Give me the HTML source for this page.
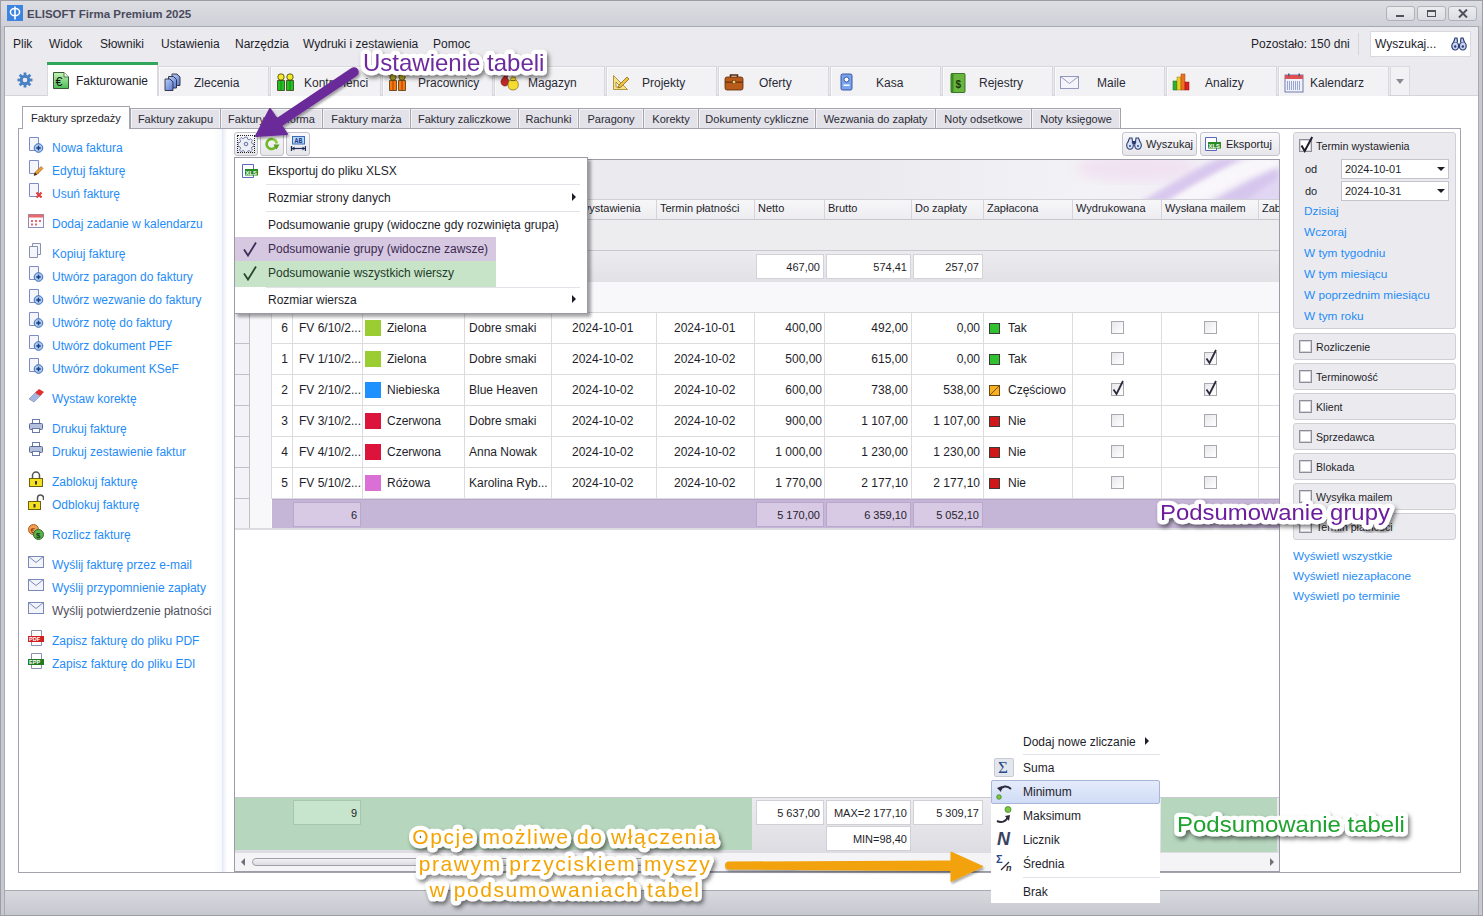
<!DOCTYPE html>
<html><head><meta charset="utf-8">
<style>
*{box-sizing:border-box;margin:0;padding:0}
html,body{width:1483px;height:916px;overflow:hidden}
body{position:relative;background:#c9cad1;font-family:"Liberation Sans",sans-serif;color:#1e1e2a;font-size:12px}
.a{position:absolute}
.t{position:absolute;white-space:nowrap;line-height:1}
#outer{left:0;top:0;width:1483px;height:916px;border:1px solid #9c9da7;background:#c8c9d0}
#titlebar{left:1px;top:1px;width:1481px;height:25px;background:linear-gradient(#dcdde3,#d0d1d8)}
#win{left:4px;top:26px;width:1475px;height:889px;background:#fff;border:1px solid #a8a9b1}
#menubar{left:5px;top:27px;width:1473px;height:31px;background:#ebebef}
#tabstrip{left:5px;top:58px;width:1473px;height:38px;background:#ebebef;border-bottom:1px solid #d4d4da}
.mtab{position:absolute;top:66px;height:30px;width:111px;background:#f2f2f4;border:1px solid #d8d8dc;border-bottom:none;box-shadow:inset 1px 1px 0 #fafafc}
.mtab .lbl{position:absolute;top:9px;font-size:12px;color:#2a2a36;white-space:nowrap;line-height:14px}
.mtab svg{position:absolute;left:5px;top:6px}
.stab{position:absolute;top:108px;height:21px;background:#e2e2e8;border:1px solid #a3a4ae;box-shadow:inset 1px 1px 0 #f4f4f7,inset -1px 0 0 #f4f4f7;font-size:11px;color:#2a2a36;text-align:center;padding-top:5px;line-height:11px;white-space:nowrap}
#status{left:5px;top:890px;width:1473px;height:25px;background:linear-gradient(#d8d9df,#c7c8cf);border-top:1px solid #a9aab2}
</style></head><body>

<div class="a" id="outer"></div>
<div class="a" id="titlebar"></div>
<div class="a" style="left:7px;top:5px;width:16px;height:16px;background:#3c84e0"></div>
<svg class="a" style="left:7px;top:5px" width="16" height="16" viewBox="0 0 16 16"><ellipse cx="8" cy="7" rx="4.6" ry="3.6" fill="none" stroke="#fff" stroke-width="1.5"/><rect x="7.2" y="1.5" width="1.6" height="13" fill="#fff"/></svg>
<div class="t" style="left:27px;top:9px;font-size:11.5px;font-weight:bold;color:#4a4a5c">ELISOFT Firma Premium 2025</div>
<div class="a" style="left:1386px;top:6px;width:29px;height:15px;border:1px solid #b0b1b9;border-radius:3px;background:linear-gradient(#ececf0,#dcdde2)"></div>
<div class="a" style="left:1396px;top:15px;width:8px;height:2px;background:#50505a"></div>
<div class="a" style="left:1417px;top:6px;width:29px;height:15px;border:1px solid #b0b1b9;border-radius:3px;background:linear-gradient(#ececf0,#dcdde2)"></div>
<div class="a" style="left:1427px;top:10px;width:9px;height:7px;border:1px solid #50505a;border-top-width:2px"></div>
<div class="a" style="left:1448px;top:6px;width:29px;height:15px;border:1px solid #b0b1b9;border-radius:3px;background:linear-gradient(#ececf0,#dcdde2)"></div>
<svg class="a" style="left:1458px;top:9px" width="10" height="9" viewBox="0 0 10 9"><path d="M1 0.5l8 8M9 0.5l-8 8" stroke="#50505a" stroke-width="2"/></svg>
<div class="a" id="win"></div>
<div class="a" id="menubar"></div>
<div class="t" style="left:13px;top:38px;font-size:12px">Plik</div>
<div class="t" style="left:49px;top:38px;font-size:12px">Widok</div>
<div class="t" style="left:100px;top:38px;font-size:12px">Słowniki</div>
<div class="t" style="left:161px;top:38px;font-size:12px">Ustawienia</div>
<div class="t" style="left:235px;top:38px;font-size:12px">Narzędzia</div>
<div class="t" style="left:303px;top:38px;font-size:12px">Wydruki i zestawienia</div>
<div class="t" style="left:433px;top:38px;font-size:12px">Pomoc</div>
<div class="t" style="left:1251px;top:38px;font-size:12px">Pozostało: 150 dni</div>
<div class="a" style="left:1358px;top:33px;width:1px;height:22px;background:#d4d4da"></div>
<div class="a" style="left:1370px;top:31px;width:101px;height:26px;background:#fff;border:1px solid #d8d8de"></div>
<div class="t" style="left:1375px;top:38px;font-size:12px">Wyszukaj...</div>
<svg class="a" style="left:1451px;top:37px" width="16" height="14" viewBox="0 0 16 14"><g fill="#c8d6f4" stroke="#2a3a70" stroke-width="1.2"><ellipse cx="4.2" cy="9" rx="3.4" ry="4"/><ellipse cx="11.8" cy="9" rx="3.4" ry="4"/><path d="M2.5 5.5l1.5-4.5h2l.5 4M13.5 5.5l-1.5-4.5h-2l-.5 4"/></g><circle cx="4.2" cy="9.5" r="1.2" fill="#2a3a70"/><circle cx="11.8" cy="9.5" r="1.2" fill="#2a3a70"/></svg>
<div class="a" id="status"></div>
<div class="a" id="tabstrip"></div>
<svg class="a" style="left:17px;top:72px" width="16" height="16" viewBox="0 0 16 16"><g fill="#4a80c4"><circle cx="8" cy="8" r="5.2"/><rect x="6.6" y="0.5" width="2.8" height="15"/><rect x="0.5" y="6.6" width="15" height="2.8"/><rect x="6.6" y="0.5" width="2.8" height="15" transform="rotate(45 8 8)"/><rect x="6.6" y="0.5" width="2.8" height="15" transform="rotate(-45 8 8)"/></g><circle cx="8" cy="8" r="2.3" fill="#ebebef"/></svg>
<div class="a" style="left:47px;top:62px;width:111px;height:34px;background:#fff;border-left:1px solid #dadade;border-right:1px solid #dadade"></div>
<div class="a" style="left:47px;top:62px;width:111px;height:3px;background:#2fa65a"></div>
<svg class="a" style="left:53px;top:72px" width="16" height="17" viewBox="0 0 16 17"><defs><linearGradient id="ge" x1="0" y1="0" x2="0" y2="1"><stop offset="0" stop-color="#c4f4b8"/><stop offset="1" stop-color="#4cbc58"/></linearGradient></defs><path d="M0.5 0.5H11L15.5 5V16.5H0.5Z" fill="url(#ge)" stroke="#3a5a3a"/><path d="M11 0.5V5H15.5" fill="#e8f8e8" stroke="#3a5a3a" stroke-width="0.8"/><text x="2.5" y="14" font-family="Liberation Sans" font-size="12.5" fill="#111">€</text></svg>
<div class="t" style="left:76px;top:75px;font-size:12px;color:#1e1e2a">Fakturowanie</div>
<div class="mtab" style="left:158px"><svg width="18" height="18" viewBox="0 0 18 18"><defs><linearGradient id="gz" x1="0" y1="0" x2="1" y2="1"><stop offset="0" stop-color="#b8d0f8"/><stop offset="1" stop-color="#5a78d0"/></linearGradient></defs><g stroke="#2a2a40" stroke-width="0.9" fill="url(#gz)"><path d="M8 1h5l3 3v8.5h-8z"/><path d="M4.5 3.5h5l3 3v8.5h-8z"/><path d="M1 6h5l3 3v8.5h-8z"/></g></svg><span class="lbl" style="left:35px">Zlecenia</span></div>
<div class="mtab" style="left:270px"><svg width="20" height="18" viewBox="0 0 20 18"><g stroke="#3a3a10" stroke-width="0.8"><circle cx="5" cy="4" r="3.2" fill="#f4ec20"/><circle cx="14" cy="4" r="3.2" fill="#f4ec20"/><path d="M1.5 7.5h7v10h-7z" fill="#22c022"/><path d="M10.5 7.5h7v10h-7z" fill="#22c022"/></g><path d="M5 8v9M14 8v9" stroke="#108010" stroke-width="0.8"/></svg><span class="lbl" style="left:33px">Kontrahenci</span></div>
<div class="mtab" style="left:382px"><svg width="20" height="18" viewBox="0 0 20 18"><g stroke="#4a3a10" stroke-width="0.8"><circle cx="5" cy="4" r="3.2" fill="#b8a828"/><circle cx="14" cy="4" r="3.2" fill="#b8a828"/><path d="M1.5 7.5h7v10h-7z" fill="#f47a10"/><path d="M10.5 7.5h7v10h-7z" fill="#f47a10"/></g><path d="M5 8v9M14 8v9" stroke="#c04000" stroke-width="1.2"/></svg><span class="lbl" style="left:35px">Pracownicy</span></div>
<div class="mtab" style="left:494px"><svg width="20" height="18" viewBox="0 0 20 18"><path d="M2 6l3-4h3l-1 3c3 2 2 8-2 8c-4 0-5-5-3-7z" fill="#c02828" stroke="#601010" stroke-width="0.6"/><path d="M10 7l2-3h3l1 3c4 3 3 10-3 10c-6 0-6-7-3-10z" fill="#f6dc30" stroke="#806a10" stroke-width="0.7"/><path d="M10.5 7.5h5" stroke="#806a10" stroke-width="1"/></svg><span class="lbl" style="left:33px">Magazyn</span></div>
<div class="mtab" style="left:606px"><svg width="20" height="18" viewBox="0 0 20 18"><path d="M1.5 2.5v14h14z M4 9v5h5z" fill="#f8e08a" fill-rule="evenodd" stroke="#a08020" stroke-width="0.8"/><path d="M6 15l1-3 8-8 2 2-8 8z" fill="#f0c040" stroke="#805a10" stroke-width="0.7"/></svg><span class="lbl" style="left:35px">Projekty</span></div>
<div class="mtab" style="left:718px"><svg width="20" height="18" viewBox="0 0 20 18"><path d="M6.5 4V2h7v2" fill="none" stroke="#5a2a08" stroke-width="1.6"/><rect x="1" y="4" width="18" height="13" rx="2" fill="#b85a1a" stroke="#5a2a08" stroke-width="0.8"/><rect x="1" y="8.5" width="18" height="1.3" fill="#6a300c"/><rect x="8.5" y="7.5" width="3" height="3" fill="#f0d070" stroke="#5a2a08" stroke-width="0.5"/></svg><span class="lbl" style="left:40px">Oferty</span></div>
<div class="mtab" style="left:830px"><svg width="20" height="18" viewBox="0 0 20 18"><rect x="5" y="1" width="11" height="16" rx="1.5" fill="#7aa4ec" stroke="#2a4a98" stroke-width="0.9"/><circle cx="10.5" cy="6.5" r="2.5" fill="#fff" stroke="#2a4a98" stroke-width="0.9"/><rect x="7.5" y="11.5" width="6" height="1.5" fill="#fff"/></svg><span class="lbl" style="left:45px">Kasa</span></div>
<div class="mtab" style="left:942px"><svg width="20" height="20" viewBox="0 0 20 20"><rect x="3" y="0.5" width="14" height="19" rx="1" fill="#6ab440" stroke="#2a6a18" stroke-width="0.9"/><rect x="3" y="0.5" width="2.5" height="19" fill="#3a8a22"/><text x="7.5" y="14.5" font-family="Liberation Sans" font-size="10" font-weight="bold" fill="#1a3a0a">$</text></svg><span class="lbl" style="left:36px">Rejestry</span></div>
<div class="mtab" style="left:1054px"><svg width="20" height="18" viewBox="0 0 20 18"><rect x="0.5" y="3.5" width="18" height="12" fill="#f4f4fa" stroke="#8a90b8" stroke-width="0.9"/><path d="M0.5 3.5l9 7 9-7" fill="none" stroke="#8a90b8" stroke-width="0.9"/></svg><span class="lbl" style="left:42px">Maile</span></div>
<div class="mtab" style="left:1166px"><svg width="20" height="18" viewBox="0 0 20 18"><rect x="1" y="8" width="4" height="9" fill="#30b030" stroke="#1a6a1a" stroke-width="0.5"/><rect x="5" y="4" width="4" height="13" fill="#e8d020" stroke="#8a7a10" stroke-width="0.5"/><rect x="9" y="1" width="4" height="16" fill="#f07020" stroke="#9a4010" stroke-width="0.5"/><rect x="13" y="9" width="4" height="8" fill="#e02020" stroke="#8a1010" stroke-width="0.5"/></svg><span class="lbl" style="left:38px">Analizy</span></div>
<div class="mtab" style="left:1278px"><svg width="20" height="20" viewBox="0 0 20 20"><rect x="1" y="2" width="18" height="17" fill="#eef0fa" stroke="#6070a0" stroke-width="0.9"/><rect x="1" y="2" width="18" height="4" fill="#e05050"/><g fill="#9aa4d0"><rect x="3" y="8" width="1" height="9"/><rect x="5" y="8" width="1" height="9"/><rect x="7" y="8" width="1" height="9"/><rect x="9" y="8" width="1" height="9"/><rect x="11" y="8" width="1" height="9"/><rect x="13" y="8" width="1" height="9"/><rect x="15" y="8" width="1" height="9"/></g><rect x="4" y="0.5" width="1.5" height="3" fill="#505a80"/><rect x="14.5" y="0.5" width="1.5" height="3" fill="#505a80"/></svg><span class="lbl" style="left:31px">Kalendarz</span></div>
<div class="a" style="left:1390px;top:66px;width:20px;height:29px;background:#f2f2f4;border:1px solid #dadade;border-bottom:none"></div>
<div class="a" style="left:1396px;top:79px;width:0;height:0;border-left:4.5px solid transparent;border-right:4.5px solid transparent;border-top:5px solid #8a8a94"></div>
<div class="a" style="left:18px;top:128px;width:1443px;height:745px;border:1px solid #a3a4ae;background:#fff"></div>
<div class="stab" style="left:130px;width:91px">Faktury zakupu</div>
<div class="stab" style="left:220px;width:103px">Faktury pro forma</div>
<div class="stab" style="left:322px;width:89px">Faktury marża</div>
<div class="stab" style="left:410px;width:109px">Faktury zaliczkowe</div>
<div class="stab" style="left:518px;width:61px">Rachunki</div>
<div class="stab" style="left:578px;width:66px">Paragony</div>
<div class="stab" style="left:643px;width:56px">Korekty</div>
<div class="stab" style="left:698px;width:118px">Dokumenty cykliczne</div>
<div class="stab" style="left:815px;width:121px">Wezwania do zapłaty</div>
<div class="stab" style="left:935px;width:97px">Noty odsetkowe</div>
<div class="stab" style="left:1031px;width:90px">Noty księgowe</div>
<div class="a" style="left:22px;top:106px;width:108px;height:23px;background:#fff;border:1px solid #a3a4ae;border-bottom:none"></div>
<div class="t" style="left:31px;top:113px;font-size:11px;color:#1e1e2a">Faktury sprzedaży</div>
<div class="a" style="left:212px;top:129px;width:10px;height:743px;background:linear-gradient(90deg,#fff,#f8f9fc)"></div><div class="a" style="left:222px;top:129px;width:5px;height:743px;background:linear-gradient(90deg,#e2e8f4,#f4f6fb 60%,#fff)"></div>
<svg class="a" style="left:28px;top:137px" width="16" height="16" viewBox="0 0 16 16"><path d="M1.5 0.5h9v13h-9z" fill="#f4f6fc" stroke="#7d8cc8"/><circle cx="10.5" cy="11" r="4.3" fill="#a8c8ee" stroke="#3a6ab8" stroke-width="1"/><path d="M8.3 11h4.4M10.5 8.8v4.4" stroke="#1a3a80" stroke-width="1.4"/></svg>
<div class="t" style="left:52px;top:142px;font-size:12px;color:#1f8cf8">Nowa faktura</div>
<svg class="a" style="left:28px;top:160px" width="16" height="16" viewBox="0 0 16 16"><path d="M1.5 0.5h9v13h-9z" fill="#f4f6fc" stroke="#7d8cc8"/><path d="M6 15.5l1-3 6-6 2 2-6 6z" fill="#e8a030" stroke="#9a5a10" stroke-width="0.6"/><path d="M6 15.5l1-3 2 2z" fill="#222"/></svg>
<div class="t" style="left:52px;top:165px;font-size:12px;color:#1f8cf8">Edytuj fakturę</div>
<svg class="a" style="left:28px;top:183px" width="16" height="16" viewBox="0 0 16 16"><path d="M1.5 0.5h9v13h-9z" fill="#f4f6fc" stroke="#7d8cc8"/><path d="M8.5 9.5l5 5M13.5 9.5l-5 5" stroke="#e04040" stroke-width="2.2"/></svg>
<div class="t" style="left:52px;top:188px;font-size:12px;color:#1f8cf8">Usuń fakturę</div>
<svg class="a" style="left:28px;top:213px" width="16" height="16" viewBox="0 0 16 16"><rect x="0.5" y="1.5" width="15" height="13" fill="#fafafe" stroke="#8a8fb8"/><rect x="0.5" y="1.5" width="15" height="3" fill="#e86a6a"/><g fill="#e06a6a"><rect x="3" y="7" width="2" height="2"/><rect x="7" y="7" width="2" height="2"/><rect x="11" y="7" width="2" height="2"/><rect x="3" y="10.5" width="2" height="2"/><rect x="7" y="10.5" width="2" height="2"/></g></svg>
<div class="t" style="left:52px;top:218px;font-size:12px;color:#1f8cf8">Dodaj zadanie w kalendarzu</div>
<svg class="a" style="left:28px;top:243px" width="16" height="16" viewBox="0 0 16 16"><path d="M4.5 0.5h8v11h-8z" fill="#f4f6fc" stroke="#8a90b0"/><path d="M1.5 3.5h8v11h-8z" fill="#f4f6fc" stroke="#8a90b0"/></svg>
<div class="t" style="left:52px;top:248px;font-size:12px;color:#1f8cf8">Kopiuj fakturę</div>
<svg class="a" style="left:28px;top:266px" width="16" height="16" viewBox="0 0 16 16"><path d="M1.5 0.5h9v13h-9z" fill="#f4f6fc" stroke="#7d8cc8"/><circle cx="10.5" cy="11" r="4.3" fill="#a8c8ee" stroke="#3a6ab8" stroke-width="1"/><path d="M8.3 11h4.4M10.5 8.8v4.4" stroke="#1a3a80" stroke-width="1.4"/></svg>
<div class="t" style="left:52px;top:271px;font-size:12px;color:#1f8cf8">Utwórz paragon do faktury</div>
<svg class="a" style="left:28px;top:289px" width="16" height="16" viewBox="0 0 16 16"><path d="M1.5 0.5h9v13h-9z" fill="#f4f6fc" stroke="#7d8cc8"/><circle cx="10.5" cy="11" r="4.3" fill="#a8c8ee" stroke="#3a6ab8" stroke-width="1"/><path d="M8.3 11h4.4M10.5 8.8v4.4" stroke="#1a3a80" stroke-width="1.4"/></svg>
<div class="t" style="left:52px;top:294px;font-size:12px;color:#1f8cf8">Utwórz wezwanie do faktury</div>
<svg class="a" style="left:28px;top:312px" width="16" height="16" viewBox="0 0 16 16"><path d="M1.5 0.5h9v13h-9z" fill="#f4f6fc" stroke="#7d8cc8"/><circle cx="10.5" cy="11" r="4.3" fill="#a8c8ee" stroke="#3a6ab8" stroke-width="1"/><path d="M8.3 11h4.4M10.5 8.8v4.4" stroke="#1a3a80" stroke-width="1.4"/></svg>
<div class="t" style="left:52px;top:317px;font-size:12px;color:#1f8cf8">Utwórz notę do faktury</div>
<svg class="a" style="left:28px;top:335px" width="16" height="16" viewBox="0 0 16 16"><path d="M1.5 0.5h9v13h-9z" fill="#f4f6fc" stroke="#7d8cc8"/><circle cx="10.5" cy="11" r="4.3" fill="#a8c8ee" stroke="#3a6ab8" stroke-width="1"/><path d="M8.3 11h4.4M10.5 8.8v4.4" stroke="#1a3a80" stroke-width="1.4"/></svg>
<div class="t" style="left:52px;top:340px;font-size:12px;color:#1f8cf8">Utwórz dokument PEF</div>
<svg class="a" style="left:28px;top:358px" width="16" height="16" viewBox="0 0 16 16"><path d="M1.5 0.5h9v13h-9z" fill="#f4f6fc" stroke="#7d8cc8"/><circle cx="10.5" cy="11" r="4.3" fill="#a8c8ee" stroke="#3a6ab8" stroke-width="1"/><path d="M8.3 11h4.4M10.5 8.8v4.4" stroke="#1a3a80" stroke-width="1.4"/></svg>
<div class="t" style="left:52px;top:363px;font-size:12px;color:#1f8cf8">Utwórz dokument KSeF</div>
<svg class="a" style="left:28px;top:388px" width="16" height="16" viewBox="0 0 16 16"><path d="M1 11l8-8 5 3-8 8z" fill="#f0f0f4" stroke="#8080a0" stroke-width="0.6"/><path d="M7 5l4-4 5 3-4 4z" fill="#e03030"/><path d="M1 11l6-6 5 3-6 6z" fill="#7090d0" opacity="0.6"/></svg>
<div class="t" style="left:52px;top:393px;font-size:12px;color:#1f8cf8">Wystaw korektę</div>
<svg class="a" style="left:28px;top:418px" width="16" height="16" viewBox="0 0 16 16"><rect x="4.5" y="1.5" width="7" height="4" fill="#fff" stroke="#6a7aa8"/><rect x="1.5" y="5.5" width="13" height="6" rx="1" fill="#b4c0dc" stroke="#5a6a98"/><rect x="4.5" y="10.5" width="7" height="4" fill="#fff" stroke="#6a7aa8"/></svg>
<div class="t" style="left:52px;top:423px;font-size:12px;color:#1f8cf8">Drukuj fakturę</div>
<svg class="a" style="left:28px;top:441px" width="16" height="16" viewBox="0 0 16 16"><rect x="4.5" y="1.5" width="7" height="4" fill="#fff" stroke="#6a7aa8"/><rect x="1.5" y="5.5" width="13" height="6" rx="1" fill="#b4c0dc" stroke="#5a6a98"/><rect x="4.5" y="10.5" width="7" height="4" fill="#fff" stroke="#6a7aa8"/></svg>
<div class="t" style="left:52px;top:446px;font-size:12px;color:#1f8cf8">Drukuj zestawienie faktur</div>
<svg class="a" style="left:28px;top:471px" width="16" height="16" viewBox="0 0 16 16"><path d="M4.5 7V4.5a3.5 3.5 0 0 1 7 0V7" fill="none" stroke="#555" stroke-width="1.5"/><rect x="1.5" y="7.5" width="13" height="8" fill="#f4e020" stroke="#6a6010"/><rect x="7" y="10" width="2" height="3.5" fill="#333"/></svg>
<div class="t" style="left:52px;top:476px;font-size:12px;color:#1f8cf8">Zablokuj fakturę</div>
<svg class="a" style="left:28px;top:494px" width="16" height="16" viewBox="0 0 16 16"><path d="M9.5 7V4a3 3 0 0 1 6 0V6" fill="none" stroke="#555" stroke-width="1.5"/><rect x="0.5" y="7.5" width="12" height="8" fill="#f4e020" stroke="#6a6010"/><rect x="5.5" y="10" width="2" height="3.5" fill="#333"/></svg>
<div class="t" style="left:52px;top:499px;font-size:12px;color:#1f8cf8">Odblokuj fakturę</div>
<svg class="a" style="left:28px;top:524px" width="16" height="16" viewBox="0 0 16 16"><circle cx="5.5" cy="5.5" r="5" fill="#f0a050" stroke="#b05a20"/><text x="2.5" y="9" font-size="8" font-family="Liberation Sans" fill="#803010">€</text><circle cx="10.5" cy="10.5" r="5" fill="#60b050" stroke="#2a7020"/><text x="8" y="14" font-size="8" font-weight="bold" font-family="Liberation Sans" fill="#103a10">$</text></svg>
<div class="t" style="left:52px;top:529px;font-size:12px;color:#1f8cf8">Rozlicz fakturę</div>
<svg class="a" style="left:28px;top:554px" width="16" height="16" viewBox="0 0 16 16"><rect x="0.5" y="2.5" width="15" height="11" fill="#f2f4fa" stroke="#7a88b8"/><path d="M0.5 2.5l7.5 6 7.5-6" fill="none" stroke="#7a88b8"/></svg>
<div class="t" style="left:52px;top:559px;font-size:12px;color:#1f8cf8">Wyślij fakturę przez e-mail</div>
<svg class="a" style="left:28px;top:577px" width="16" height="16" viewBox="0 0 16 16"><rect x="0.5" y="2.5" width="15" height="11" fill="#f2f4fa" stroke="#7a88b8"/><path d="M0.5 2.5l7.5 6 7.5-6" fill="none" stroke="#7a88b8"/></svg>
<div class="t" style="left:52px;top:582px;font-size:12px;color:#1f8cf8">Wyślij przypomnienie zapłaty</div>
<svg class="a" style="left:28px;top:600px" width="16" height="16" viewBox="0 0 16 16"><rect x="0.5" y="2.5" width="15" height="11" fill="#f2f4fa" stroke="#7a88b8"/><path d="M0.5 2.5l7.5 6 7.5-6" fill="none" stroke="#7a88b8"/></svg>
<div class="t" style="left:52px;top:605px;font-size:12px;color:#505060">Wyślij potwierdzenie płatności</div>
<svg class="a" style="left:28px;top:630px" width="16" height="16" viewBox="0 0 16 16"><path d="M3.5 0.5h10v15h-10z" fill="#fff" stroke="#8a90b0"/><rect x="0" y="6" width="16" height="6" fill="#d02020"/><text x="1" y="11.3" font-size="5.6" font-weight="bold" font-family="Liberation Sans" fill="#fff">PDF</text></svg>
<div class="t" style="left:52px;top:635px;font-size:12px;color:#1f8cf8">Zapisz fakturę do pliku PDF</div>
<svg class="a" style="left:28px;top:653px" width="16" height="16" viewBox="0 0 16 16"><path d="M3.5 0.5h10v15h-10z" fill="#fff" stroke="#8a90b0"/><rect x="0" y="6" width="16" height="6" fill="#207a20"/><text x="1" y="11.3" font-size="5.6" font-weight="bold" font-family="Liberation Sans" fill="#fff">EPP</text></svg>
<div class="t" style="left:52px;top:658px;font-size:12px;color:#1f8cf8">Zapisz fakturę do pliku EDI</div>
<div class="a" style="left:234px;top:132px;width:24px;height:24px;border:1px solid #c0c1c9;border-radius:3px;background:linear-gradient(#fafafc,#e6e6ea)"></div>
<div class="a" style="left:237px;top:135px;width:18px;height:18px;border:1px dotted #222"></div>
<svg class="a" style="left:238px;top:136px" width="16" height="16" viewBox="0 0 16 16"><path d="M6.8 1.2h2.4l.4 2 1.5.7 1.7-1.2 1.7 1.7-1.2 1.7.7 1.5 2 .4v2.4l-2 .4-.7 1.5 1.2 1.7-1.7 1.7-1.7-1.2-1.5.7-.4 2H6.8l-.4-2-1.5-.7-1.7 1.2-1.7-1.7 1.2-1.7-.7-1.5-2-.4V6.8l2-.4.7-1.5-1.2-1.7 1.7-1.7 1.7 1.2 1.5-.7z" fill="#eef0f6" stroke="#6a74a0" stroke-width="0.9"/><circle cx="8" cy="8" r="1.8" fill="#dde2f0" stroke="#6a74a0" stroke-width="1"/></svg>
<div class="a" style="left:260px;top:132px;width:24px;height:24px;border:1px solid #c0c1c9;border-radius:3px;background:linear-gradient(#fafafc,#e6e6ea)"></div>
<svg class="a" style="left:264px;top:136px" width="16" height="16" viewBox="0 0 16 16"><path d="M12.5 9A5 5 0 1 1 9 3.2" fill="none" stroke="#6fb628" stroke-width="2.6"/><path d="M9 3.2A5 5 0 0 1 12.8 7.5" fill="none" stroke="#8acc3a" stroke-width="2.6"/><path d="M9.5 8.5h6l-3 5z" fill="#5aa020"/></svg>
<div class="a" style="left:286px;top:132px;width:24px;height:24px;border:1px solid #c0c1c9;border-radius:3px;background:linear-gradient(#fafafc,#e6e6ea)"></div>
<svg class="a" style="left:290px;top:136px" width="16" height="16" viewBox="0 0 16 16"><rect x="2.5" y="0.5" width="12" height="7.5" fill="#b8d8f8" stroke="#3a6ab8"/><text x="4.6" y="6.8" font-family="Liberation Mono" font-size="6.5" font-weight="bold" fill="#1a3a88">AB</text><path d="M2 12.5h13" stroke="#1e2e58" stroke-width="1.2"/><path d="M1.5 10v5M15.5 10v5" stroke="#1e2e58" stroke-width="1.3"/><path d="M2 12.5l2.5-2v4zM15 12.5l-2.5-2v4z" fill="#1e2e58"/></svg>
<div class="a" style="left:1122px;top:132px;width:75px;height:24px;border:1px solid #c4c5cc;border-radius:3px;background:linear-gradient(#fafafc,#e6e6ea)"></div>
<svg class="a" style="left:1126px;top:137px" width="16" height="13" viewBox="0 0 16 13"><g fill="#d8e2f6" stroke="#2a3a70" stroke-width="1.1"><ellipse cx="4" cy="8.3" rx="3.3" ry="4"/><ellipse cx="12" cy="8.3" rx="3.3" ry="4"/><path d="M2 5l1.5-4h2.5l.5 4M14 5l-1.5-4h-2.5l-.5 4"/></g><rect x="6.5" y="4" width="3" height="3" fill="#2a3a70"/><circle cx="4" cy="9" r="1.1" fill="#2a5ab0"/><circle cx="12" cy="9" r="1.1" fill="#2a5ab0"/></svg>
<div class="t" style="left:1146px;top:139px;font-size:11px;color:#1e1e2a">Wyszukaj</div>
<div class="a" style="left:1200px;top:132px;width:80px;height:24px;border:1px solid #c4c5cc;border-radius:3px;background:linear-gradient(#fafafc,#e6e6ea)"></div>
<svg class="a" style="left:1205px;top:137px" width="16" height="15" viewBox="0 0 16 15"><path d="M0.5 0.5h11v13h-11z" fill="#fff" stroke="#5a6ab8"/><rect x="3" y="5" width="13" height="6.5" fill="#2a8a22"/><text x="3.6" y="10.6" font-family="Liberation Sans" font-size="5.8" font-weight="bold" fill="#fff">XLS</text></svg>
<div class="t" style="left:1226px;top:139px;font-size:11px;color:#1e1e2a">Eksportuj</div>
<div class="a" style="left:234px;top:159px;width:1046px;height:713px;border:1px solid #9c9ca8;background:#fff"></div>
<div class="a" style="left:235px;top:160px;width:1044px;height:40px;background:#ebebef;overflow:hidden"><svg width="1044" height="40" style="position:absolute;left:0;top:0"><defs><linearGradient id="sw0" x1="0" x2="1"><stop offset="0" stop-color="#ebebef"/><stop offset="0.6" stop-color="#ebebef"/><stop offset="0.82" stop-color="#f3f2f6"/><stop offset="1" stop-color="#f0ecf6"/></linearGradient><filter id="bl"><feGaussianBlur stdDeviation="2.5"/></filter><filter id="bl2"><feGaussianBlur stdDeviation="6"/></filter></defs><rect x="0" y="0" width="1044" height="40" fill="url(#sw0)"/><ellipse cx="900" cy="8" rx="60" ry="14" fill="#f0dcf0" opacity="0.7" filter="url(#bl2)"/><path d="M905 42 C935 25 960 8 985 -2 L1010 -2 C985 10 960 25 935 42Z" fill="#d9c8ee" filter="url(#bl)"/><path d="M930 42 C960 25 990 8 1020 -2 L1044 -2 L1044 5 C1020 12 995 25 965 42Z" fill="#faf8fc" opacity="0.9" filter="url(#bl)"/><path d="M975 42 C1000 28 1025 14 1044 8 L1046 42Z" fill="#d6c6ee" filter="url(#bl)"/><path d="M1010 42 C1025 30 1035 22 1046 18 L1046 42Z" fill="#e4daf4" opacity="0.8" filter="url(#bl)"/></svg></div>
<div class="a" style="left:235px;top:199px;width:1044px;height:21px;background:linear-gradient(#f7f7f9,#ededf1);border-top:1px solid #d0d0d6;border-bottom:1px solid #c8c8ce"></div>
<div class="a" style="left:271px;top:200px;width:1px;height:19px;background:#d4d4da"></div>
<div class="a" style="left:292px;top:200px;width:1px;height:19px;background:#d4d4da"></div>
<div class="a" style="left:362px;top:200px;width:1px;height:19px;background:#d4d4da"></div>
<div class="a" style="left:464px;top:200px;width:1px;height:19px;background:#d4d4da"></div>
<div class="a" style="left:551px;top:200px;width:1px;height:19px;background:#d4d4da"></div>
<div class="a" style="left:656px;top:200px;width:1px;height:19px;background:#d4d4da"></div>
<div class="a" style="left:754px;top:200px;width:1px;height:19px;background:#d4d4da"></div>
<div class="a" style="left:824px;top:200px;width:1px;height:19px;background:#d4d4da"></div>
<div class="a" style="left:911px;top:200px;width:1px;height:19px;background:#d4d4da"></div>
<div class="a" style="left:983px;top:200px;width:1px;height:19px;background:#d4d4da"></div>
<div class="a" style="left:1072px;top:200px;width:1px;height:19px;background:#d4d4da"></div>
<div class="a" style="left:1161px;top:200px;width:1px;height:19px;background:#d4d4da"></div>
<div class="a" style="left:1258px;top:200px;width:1px;height:19px;background:#d4d4da"></div>
<div class="a" style="left:235px;top:200px;width:1044px;height:19px;overflow:hidden">
<div class="t" style="left:320px;top:3px;font-size:11px;color:#1e1e2a">Data wystawienia</div>
<div class="t" style="left:425px;top:3px;font-size:11px;color:#1e1e2a">Termin płatności</div>
<div class="t" style="left:523px;top:3px;font-size:11px;color:#1e1e2a">Netto</div>
<div class="t" style="left:593px;top:3px;font-size:11px;color:#1e1e2a">Brutto</div>
<div class="t" style="left:680px;top:3px;font-size:11px;color:#1e1e2a">Do zapłaty</div>
<div class="t" style="left:752px;top:3px;font-size:11px;color:#1e1e2a">Zapłacona</div>
<div class="t" style="left:841px;top:3px;font-size:11px;color:#1e1e2a">Wydrukowana</div>
<div class="t" style="left:930px;top:3px;font-size:11px;color:#1e1e2a">Wysłana mailem</div>
<div class="t" style="left:1027px;top:3px;font-size:11px;color:#1e1e2a">Zab</div>
</div>
<div class="a" style="left:235px;top:220px;width:15px;height:309px;background:#f3f3f7;border-right:1px solid #c0c0c8"></div>
<div class="a" style="left:250px;top:220px;width:1029px;height:31px;background:#ededf0;border-bottom:1px solid #c8c8ce"></div>
<div class="a" style="left:250px;top:251px;width:1029px;height:31px;background:linear-gradient(#ececf0,#e2e2e6)"></div>
<div class="a" style="left:756px;top:254px;width:68px;height:25px;background:#fff;border:1px solid #d2d2d8"></div>
<div class="t" style="left:756px;width:64px;text-align:right;top:262px;font-size:11px;color:#1e1e2a">467,00</div>
<div class="a" style="left:826px;top:254px;width:85px;height:25px;background:#fff;border:1px solid #d2d2d8"></div>
<div class="t" style="left:826px;width:81px;text-align:right;top:262px;font-size:11px;color:#1e1e2a">574,41</div>
<div class="a" style="left:913px;top:254px;width:70px;height:25px;background:#fff;border:1px solid #d2d2d8"></div>
<div class="t" style="left:913px;width:66px;text-align:right;top:262px;font-size:11px;color:#1e1e2a">257,07</div>
<div class="a" style="left:250px;top:282px;width:1029px;height:31px;background:#f8f8fa;border-bottom:1px solid #d8d8dc"></div>
<div class="a" style="left:250px;top:313px;width:21px;height:216px;background:#f8f8fb"></div>
<div class="a" style="left:235px;top:343px;width:15px;height:1px;background:#c0c0c8"></div>
<div class="a" style="left:271px;top:343px;width:1008px;height:1px;background:#dcdce0"></div>
<div class="t" style="left:271px;width:17px;text-align:right;top:322px;font-size:12px">6</div>
<div class="t" style="left:299px;top:322px;font-size:12px">FV 6/10/2...</div>
<div class="a" style="left:365px;top:320px;width:16px;height:16px;background:#9acd32"></div>
<div class="t" style="left:387px;top:322px;font-size:12px">Zielona</div>
<div class="t" style="left:469px;top:322px;font-size:12px">Dobre smaki</div>
<div class="t" style="left:572px;top:322px;font-size:12px">2024-10-01</div>
<div class="t" style="left:674px;top:322px;font-size:12px">2024-10-01</div>
<div class="t" style="left:754px;width:68px;text-align:right;top:322px;font-size:12px">400,00</div>
<div class="t" style="left:824px;width:84px;text-align:right;top:322px;font-size:12px">492,00</div>
<div class="t" style="left:911px;width:69px;text-align:right;top:322px;font-size:12px">0,00</div>
<div class="a" style="left:989px;top:323px;width:11px;height:11px;background:#30c030;border:1px solid #3a3a3a"></div>
<div class="t" style="left:1008px;top:322px;font-size:12px">Tak</div>
<div class="a" style="left:1111px;top:321px;width:13px;height:13px;border:1px solid #a8a8b0;background:linear-gradient(135deg,#e8e8ec,#fff)"></div>
<div class="a" style="left:1204px;top:321px;width:13px;height:13px;border:1px solid #a8a8b0;background:linear-gradient(135deg,#e8e8ec,#fff)"></div>
<div class="a" style="left:235px;top:374px;width:15px;height:1px;background:#c0c0c8"></div>
<div class="a" style="left:271px;top:374px;width:1008px;height:1px;background:#dcdce0"></div>
<div class="t" style="left:271px;width:17px;text-align:right;top:353px;font-size:12px">1</div>
<div class="t" style="left:299px;top:353px;font-size:12px">FV 1/10/2...</div>
<div class="a" style="left:365px;top:351px;width:16px;height:16px;background:#9acd32"></div>
<div class="t" style="left:387px;top:353px;font-size:12px">Zielona</div>
<div class="t" style="left:469px;top:353px;font-size:12px">Dobre smaki</div>
<div class="t" style="left:572px;top:353px;font-size:12px">2024-10-02</div>
<div class="t" style="left:674px;top:353px;font-size:12px">2024-10-02</div>
<div class="t" style="left:754px;width:68px;text-align:right;top:353px;font-size:12px">500,00</div>
<div class="t" style="left:824px;width:84px;text-align:right;top:353px;font-size:12px">615,00</div>
<div class="t" style="left:911px;width:69px;text-align:right;top:353px;font-size:12px">0,00</div>
<div class="a" style="left:989px;top:354px;width:11px;height:11px;background:#30c030;border:1px solid #3a3a3a"></div>
<div class="t" style="left:1008px;top:353px;font-size:12px">Tak</div>
<div class="a" style="left:1111px;top:352px;width:13px;height:13px;border:1px solid #a8a8b0;background:linear-gradient(135deg,#e8e8ec,#fff)"></div>
<div class="a" style="left:1204px;top:352px;width:13px;height:13px;border:1px solid #a8a8b0;background:linear-gradient(135deg,#e8e8ec,#fff)"></div><svg class="a" style="left:1204px;top:349px" width="14" height="16" viewBox="0 0 14 16"><path d="M2.5 9.5l3 4.5 6.5-13" fill="none" stroke="#2a2a3a" stroke-width="1.8"/></svg>
<div class="a" style="left:235px;top:405px;width:15px;height:1px;background:#c0c0c8"></div>
<div class="a" style="left:271px;top:405px;width:1008px;height:1px;background:#dcdce0"></div>
<div class="t" style="left:271px;width:17px;text-align:right;top:384px;font-size:12px">2</div>
<div class="t" style="left:299px;top:384px;font-size:12px">FV 2/10/2...</div>
<div class="a" style="left:365px;top:382px;width:16px;height:16px;background:#1e90ff"></div>
<div class="t" style="left:387px;top:384px;font-size:12px">Niebieska</div>
<div class="t" style="left:469px;top:384px;font-size:12px">Blue Heaven</div>
<div class="t" style="left:572px;top:384px;font-size:12px">2024-10-02</div>
<div class="t" style="left:674px;top:384px;font-size:12px">2024-10-02</div>
<div class="t" style="left:754px;width:68px;text-align:right;top:384px;font-size:12px">600,00</div>
<div class="t" style="left:824px;width:84px;text-align:right;top:384px;font-size:12px">738,00</div>
<div class="t" style="left:911px;width:69px;text-align:right;top:384px;font-size:12px">538,00</div>
<svg class="a" style="left:989px;top:385px" width="11" height="11" viewBox="0 0 11 11"><rect x="0.5" y="0.5" width="10" height="10" fill="#f8b020" stroke="#6a4a10"/><path d="M1 10L10 1" stroke="#6a4a10" stroke-width="0.9"/></svg>
<div class="t" style="left:1008px;top:384px;font-size:12px">Częściowo</div>
<div class="a" style="left:1111px;top:383px;width:13px;height:13px;border:1px solid #a8a8b0;background:linear-gradient(135deg,#e8e8ec,#fff)"></div><svg class="a" style="left:1111px;top:380px" width="14" height="16" viewBox="0 0 14 16"><path d="M2.5 9.5l3 4.5 6.5-13" fill="none" stroke="#2a2a3a" stroke-width="1.8"/></svg>
<div class="a" style="left:1204px;top:383px;width:13px;height:13px;border:1px solid #a8a8b0;background:linear-gradient(135deg,#e8e8ec,#fff)"></div><svg class="a" style="left:1204px;top:380px" width="14" height="16" viewBox="0 0 14 16"><path d="M2.5 9.5l3 4.5 6.5-13" fill="none" stroke="#2a2a3a" stroke-width="1.8"/></svg>
<div class="a" style="left:235px;top:436px;width:15px;height:1px;background:#c0c0c8"></div>
<div class="a" style="left:271px;top:436px;width:1008px;height:1px;background:#dcdce0"></div>
<div class="t" style="left:271px;width:17px;text-align:right;top:415px;font-size:12px">3</div>
<div class="t" style="left:299px;top:415px;font-size:12px">FV 3/10/2...</div>
<div class="a" style="left:365px;top:413px;width:16px;height:16px;background:#dc143c"></div>
<div class="t" style="left:387px;top:415px;font-size:12px">Czerwona</div>
<div class="t" style="left:469px;top:415px;font-size:12px">Dobre smaki</div>
<div class="t" style="left:572px;top:415px;font-size:12px">2024-10-02</div>
<div class="t" style="left:674px;top:415px;font-size:12px">2024-10-02</div>
<div class="t" style="left:754px;width:68px;text-align:right;top:415px;font-size:12px">900,00</div>
<div class="t" style="left:824px;width:84px;text-align:right;top:415px;font-size:12px">1 107,00</div>
<div class="t" style="left:911px;width:69px;text-align:right;top:415px;font-size:12px">1 107,00</div>
<div class="a" style="left:989px;top:416px;width:11px;height:11px;background:#d01818;border:1px solid #3a3a3a"></div>
<div class="t" style="left:1008px;top:415px;font-size:12px">Nie</div>
<div class="a" style="left:1111px;top:414px;width:13px;height:13px;border:1px solid #a8a8b0;background:linear-gradient(135deg,#e8e8ec,#fff)"></div>
<div class="a" style="left:1204px;top:414px;width:13px;height:13px;border:1px solid #a8a8b0;background:linear-gradient(135deg,#e8e8ec,#fff)"></div>
<div class="a" style="left:235px;top:467px;width:15px;height:1px;background:#c0c0c8"></div>
<div class="a" style="left:271px;top:467px;width:1008px;height:1px;background:#dcdce0"></div>
<div class="t" style="left:271px;width:17px;text-align:right;top:446px;font-size:12px">4</div>
<div class="t" style="left:299px;top:446px;font-size:12px">FV 4/10/2...</div>
<div class="a" style="left:365px;top:444px;width:16px;height:16px;background:#dc143c"></div>
<div class="t" style="left:387px;top:446px;font-size:12px">Czerwona</div>
<div class="t" style="left:469px;top:446px;font-size:12px">Anna Nowak</div>
<div class="t" style="left:572px;top:446px;font-size:12px">2024-10-02</div>
<div class="t" style="left:674px;top:446px;font-size:12px">2024-10-02</div>
<div class="t" style="left:754px;width:68px;text-align:right;top:446px;font-size:12px">1 000,00</div>
<div class="t" style="left:824px;width:84px;text-align:right;top:446px;font-size:12px">1 230,00</div>
<div class="t" style="left:911px;width:69px;text-align:right;top:446px;font-size:12px">1 230,00</div>
<div class="a" style="left:989px;top:447px;width:11px;height:11px;background:#d01818;border:1px solid #3a3a3a"></div>
<div class="t" style="left:1008px;top:446px;font-size:12px">Nie</div>
<div class="a" style="left:1111px;top:445px;width:13px;height:13px;border:1px solid #a8a8b0;background:linear-gradient(135deg,#e8e8ec,#fff)"></div>
<div class="a" style="left:1204px;top:445px;width:13px;height:13px;border:1px solid #a8a8b0;background:linear-gradient(135deg,#e8e8ec,#fff)"></div>
<div class="a" style="left:235px;top:498px;width:15px;height:1px;background:#c0c0c8"></div>
<div class="a" style="left:271px;top:498px;width:1008px;height:1px;background:#dcdce0"></div>
<div class="t" style="left:271px;width:17px;text-align:right;top:477px;font-size:12px">5</div>
<div class="t" style="left:299px;top:477px;font-size:12px">FV 5/10/2...</div>
<div class="a" style="left:365px;top:475px;width:16px;height:16px;background:#da70d6"></div>
<div class="t" style="left:387px;top:477px;font-size:12px">Różowa</div>
<div class="t" style="left:469px;top:477px;font-size:12px">Karolina Ryb...</div>
<div class="t" style="left:572px;top:477px;font-size:12px">2024-10-02</div>
<div class="t" style="left:674px;top:477px;font-size:12px">2024-10-02</div>
<div class="t" style="left:754px;width:68px;text-align:right;top:477px;font-size:12px">1 770,00</div>
<div class="t" style="left:824px;width:84px;text-align:right;top:477px;font-size:12px">2 177,10</div>
<div class="t" style="left:911px;width:69px;text-align:right;top:477px;font-size:12px">2 177,10</div>
<div class="a" style="left:989px;top:478px;width:11px;height:11px;background:#d01818;border:1px solid #3a3a3a"></div>
<div class="t" style="left:1008px;top:477px;font-size:12px">Nie</div>
<div class="a" style="left:1111px;top:476px;width:13px;height:13px;border:1px solid #a8a8b0;background:linear-gradient(135deg,#e8e8ec,#fff)"></div>
<div class="a" style="left:1204px;top:476px;width:13px;height:13px;border:1px solid #a8a8b0;background:linear-gradient(135deg,#e8e8ec,#fff)"></div>
<div class="a" style="left:271px;top:313px;width:1px;height:186px;background:#dcdce0"></div>
<div class="a" style="left:292px;top:313px;width:1px;height:186px;background:#dcdce0"></div>
<div class="a" style="left:362px;top:313px;width:1px;height:186px;background:#dcdce0"></div>
<div class="a" style="left:464px;top:313px;width:1px;height:186px;background:#dcdce0"></div>
<div class="a" style="left:551px;top:313px;width:1px;height:186px;background:#dcdce0"></div>
<div class="a" style="left:656px;top:313px;width:1px;height:186px;background:#dcdce0"></div>
<div class="a" style="left:754px;top:313px;width:1px;height:186px;background:#dcdce0"></div>
<div class="a" style="left:824px;top:313px;width:1px;height:186px;background:#dcdce0"></div>
<div class="a" style="left:911px;top:313px;width:1px;height:186px;background:#dcdce0"></div>
<div class="a" style="left:983px;top:313px;width:1px;height:186px;background:#dcdce0"></div>
<div class="a" style="left:1072px;top:313px;width:1px;height:186px;background:#dcdce0"></div>
<div class="a" style="left:1161px;top:313px;width:1px;height:186px;background:#dcdce0"></div>
<div class="a" style="left:1258px;top:313px;width:1px;height:186px;background:#dcdce0"></div>
<div class="a" style="left:272px;top:499px;width:1007px;height:29px;background:#c5b5d6;border-top:1px solid #b8a6cc"></div>
<div class="a" style="left:235px;top:528px;width:1044px;height:2px;background:#dcdce0"></div>
<div class="a" style="left:293px;top:502px;width:68px;height:25px;background:#d8c9e5;border:1px solid #b9a8cc"></div>
<div class="t" style="left:293px;width:64px;text-align:right;top:510px;font-size:11px;color:#1e1e2a">6</div>
<div class="a" style="left:756px;top:502px;width:68px;height:25px;background:#d8c9e5;border:1px solid #b9a8cc"></div>
<div class="t" style="left:756px;width:64px;text-align:right;top:510px;font-size:11px;color:#1e1e2a">5 170,00</div>
<div class="a" style="left:826px;top:502px;width:85px;height:25px;background:#d8c9e5;border:1px solid #b9a8cc"></div>
<div class="t" style="left:826px;width:81px;text-align:right;top:510px;font-size:11px;color:#1e1e2a">6 359,10</div>
<div class="a" style="left:913px;top:502px;width:70px;height:25px;background:#d8c9e5;border:1px solid #b9a8cc"></div>
<div class="t" style="left:913px;width:66px;text-align:right;top:510px;font-size:11px;color:#1e1e2a">5 052,10</div>
<div class="a" style="left:235px;top:797px;width:1044px;height:57px;background:linear-gradient(#ececf0,#dcdce2);border-top:1px solid #c8c8ce"></div>
<div class="a" style="left:235px;top:798px;width:517px;height:52px;background:#b6d6bd"></div>
<div class="a" style="left:1161px;top:798px;width:116px;height:54px;background:#b6d6bd"></div>
<div class="a" style="left:293px;top:800px;width:68px;height:25px;background:#c7e5cc;border:1px solid #a6c6ae"></div>
<div class="t" style="left:293px;width:64px;text-align:right;top:808px;font-size:11px;color:#1e1e2a">9</div>
<div class="a" style="left:756px;top:800px;width:68px;height:25px;background:#fff;border:1px solid #d0d0d6"></div>
<div class="t" style="left:756px;width:64px;text-align:right;top:808px;font-size:11px;color:#1e1e2a">5 637,00</div>
<div class="a" style="left:826px;top:800px;width:85px;height:25px;background:#fff;border:1px solid #d0d0d6"></div>
<div class="t" style="left:826px;width:81px;text-align:right;top:808px;font-size:11px;color:#1e1e2a">MAX=2 177,10</div>
<div class="a" style="left:913px;top:800px;width:70px;height:25px;background:#fff;border:1px solid #d0d0d6"></div>
<div class="t" style="left:913px;width:66px;text-align:right;top:808px;font-size:11px;color:#1e1e2a">5 309,17</div>
<div class="a" style="left:826px;top:826px;width:85px;height:25px;background:#fff;border:1px solid #d0d0d6"></div>
<div class="t" style="left:826px;width:81px;text-align:right;top:834px;font-size:11px;color:#1e1e2a">MIN=98,40</div>
<div class="a" style="left:235px;top:853px;width:1044px;height:18px;background:#f4f4f6"></div>
<div class="a" style="left:241px;top:858px;width:0;height:0;border-top:4px solid transparent;border-bottom:4px solid transparent;border-right:4px solid #70707a"></div>
<div class="a" style="left:1270px;top:858px;width:0;height:0;border-top:4px solid transparent;border-bottom:4px solid transparent;border-left:4px solid #70707a"></div>
<div class="a" style="left:252px;top:858px;width:452px;height:8px;border:1px solid #a0a0aa;border-radius:4px;background:linear-gradient(#f2f2f4,#dcdce0)"></div>
<div class="a" style="left:1293px;top:132px;width:163px;height:197px;background:#ebebef;border:1px solid #cfd0d6;border-radius:3px"></div>
<div class="a" style="left:1299px;top:139px;width:13px;height:13px;border:1px solid #8e8e98;box-shadow:inset 0 0 0 1px #d4d4da;background:#fff"></div>
<svg class="a" style="left:1299px;top:136px" width="15" height="17" viewBox="0 0 15 17"><path d="M2.5 9.5l3.2 5.5 7.5-14" fill="none" stroke="#1e1e2a" stroke-width="2"/></svg>
<div class="t" style="left:1316px;top:141px;font-size:10.8px;color:#1e1e2a">Termin wystawienia</div>
<div class="t" style="left:1305px;top:164px;font-size:11px;color:#1e1e2a">od</div>
<div class="t" style="left:1305px;top:186px;font-size:11px;color:#1e1e2a">do</div>
<div class="a" style="left:1341px;top:159px;width:108px;height:20px;background:#fff;border:1px solid #c4c4cc"></div>
<div class="t" style="left:1345px;top:164px;font-size:11px;color:#1e1e2a">2024-10-01</div>
<div class="a" style="left:1437px;top:167px;width:0;height:0;border-left:4px solid transparent;border-right:4px solid transparent;border-top:4px solid #1e1e2a"></div>
<div class="a" style="left:1341px;top:181px;width:108px;height:20px;background:#fff;border:1px solid #c4c4cc"></div>
<div class="t" style="left:1345px;top:186px;font-size:11px;color:#1e1e2a">2024-10-31</div>
<div class="a" style="left:1437px;top:189px;width:0;height:0;border-left:4px solid transparent;border-right:4px solid transparent;border-top:4px solid #1e1e2a"></div>
<div class="t" style="left:1304px;top:206px;font-size:11.8px;color:#1f8cf8">Dzisiaj</div>
<div class="t" style="left:1304px;top:227px;font-size:11.8px;color:#1f8cf8">Wczoraj</div>
<div class="t" style="left:1304px;top:248px;font-size:11.8px;color:#1f8cf8">W tym tygodniu</div>
<div class="t" style="left:1304px;top:269px;font-size:11.8px;color:#1f8cf8">W tym miesiącu</div>
<div class="t" style="left:1304px;top:290px;font-size:11.8px;color:#1f8cf8">W poprzednim miesiącu</div>
<div class="t" style="left:1304px;top:311px;font-size:11.8px;color:#1f8cf8">W tym roku</div>
<div class="a" style="left:1293px;top:333px;width:163px;height:27px;background:#ebebef;border:1px solid #cfd0d6;border-radius:3px"></div>
<div class="a" style="left:1299px;top:340px;width:13px;height:13px;border:1px solid #8e8e98;box-shadow:inset 0 0 0 1px #d4d4da;background:#fff"></div>
<div class="t" style="left:1316px;top:342px;font-size:10.6px;color:#1e1e2a">Rozliczenie</div>
<div class="a" style="left:1293px;top:363px;width:163px;height:27px;background:#ebebef;border:1px solid #cfd0d6;border-radius:3px"></div>
<div class="a" style="left:1299px;top:370px;width:13px;height:13px;border:1px solid #8e8e98;box-shadow:inset 0 0 0 1px #d4d4da;background:#fff"></div>
<div class="t" style="left:1316px;top:372px;font-size:10.6px;color:#1e1e2a">Terminowość</div>
<div class="a" style="left:1293px;top:393px;width:163px;height:27px;background:#ebebef;border:1px solid #cfd0d6;border-radius:3px"></div>
<div class="a" style="left:1299px;top:400px;width:13px;height:13px;border:1px solid #8e8e98;box-shadow:inset 0 0 0 1px #d4d4da;background:#fff"></div>
<div class="t" style="left:1316px;top:402px;font-size:10.6px;color:#1e1e2a">Klient</div>
<div class="a" style="left:1293px;top:423px;width:163px;height:27px;background:#ebebef;border:1px solid #cfd0d6;border-radius:3px"></div>
<div class="a" style="left:1299px;top:430px;width:13px;height:13px;border:1px solid #8e8e98;box-shadow:inset 0 0 0 1px #d4d4da;background:#fff"></div>
<div class="t" style="left:1316px;top:432px;font-size:10.6px;color:#1e1e2a">Sprzedawca</div>
<div class="a" style="left:1293px;top:453px;width:163px;height:27px;background:#ebebef;border:1px solid #cfd0d6;border-radius:3px"></div>
<div class="a" style="left:1299px;top:460px;width:13px;height:13px;border:1px solid #8e8e98;box-shadow:inset 0 0 0 1px #d4d4da;background:#fff"></div>
<div class="t" style="left:1316px;top:462px;font-size:10.6px;color:#1e1e2a">Blokada</div>
<div class="a" style="left:1293px;top:483px;width:163px;height:27px;background:#ebebef;border:1px solid #cfd0d6;border-radius:3px"></div>
<div class="a" style="left:1299px;top:490px;width:13px;height:13px;border:1px solid #8e8e98;box-shadow:inset 0 0 0 1px #d4d4da;background:#fff"></div>
<div class="t" style="left:1316px;top:492px;font-size:10.6px;color:#1e1e2a">Wysyłka mailem</div>
<div class="a" style="left:1293px;top:513px;width:163px;height:27px;background:#ebebef;border:1px solid #cfd0d6;border-radius:3px"></div>
<div class="a" style="left:1299px;top:520px;width:13px;height:13px;border:1px solid #8e8e98;box-shadow:inset 0 0 0 1px #d4d4da;background:#fff"></div>
<div class="t" style="left:1316px;top:522px;font-size:10.6px;color:#1e1e2a">Termin płatności</div>
<div class="t" style="left:1293px;top:550px;font-size:11.7px;color:#1f8cf8">Wyświetl wszystkie</div>
<div class="t" style="left:1293px;top:570px;font-size:11.7px;color:#1f8cf8">Wyświetl niezapłacone</div>
<div class="t" style="left:1293px;top:590px;font-size:11.7px;color:#1f8cf8">Wyświetl po terminie</div>
<div class="a" style="left:234px;top:157px;width:354px;height:157px;background:#fff;border:1px solid #9a9aa6;box-shadow:3px 3px 3px rgba(0,0,0,0.35)"></div>
<div class="a" style="left:235px;top:237px;width:261px;height:24px;background:#d7c8e2"></div>
<div class="a" style="left:235px;top:261px;width:261px;height:26px;background:#c8e4c8"></div>
<div class="a" style="left:266px;top:184px;width:314px;height:1px;background:#e2e2e8"></div>
<div class="a" style="left:266px;top:211px;width:314px;height:1px;background:#e2e2e8"></div>
<div class="a" style="left:266px;top:287px;width:314px;height:1px;background:#e2e2e8"></div>
<svg class="a" style="left:242px;top:164px" width="16" height="15" viewBox="0 0 16 15"><path d="M0.5 0.5h11v13h-11z" fill="#fff" stroke="#5a6ab8"/><rect x="3" y="5" width="13" height="6.5" fill="#2a8a22"/><text x="3.6" y="10.6" font-family="Liberation Sans" font-size="5.8" font-weight="bold" fill="#fff">XLS</text></svg>
<div class="t" style="left:268px;top:165px;font-size:12px;color:#1e1e2a">Eksportuj do pliku XLSX</div>
<div class="t" style="left:268px;top:192px;font-size:12px;color:#1e1e2a">Rozmiar strony danych</div>
<div class="t" style="left:268px;top:219px;font-size:12px;color:#1e1e2a">Podsumowanie grupy (widoczne gdy rozwinięta grupa)</div>
<div class="t" style="left:268px;top:243px;font-size:12px;color:#3a2a50">Podsumowanie grupy (widoczne zawsze)</div>
<div class="t" style="left:268px;top:267px;font-size:12px;color:#1f3a28">Podsumowanie wszystkich wierszy</div>
<div class="t" style="left:268px;top:294px;font-size:12px;color:#1e1e2a">Rozmiar wiersza</div>
<div class="a" style="left:572px;top:193px;width:0;height:0;border-top:4px solid transparent;border-bottom:4px solid transparent;border-left:4px solid #1e1e2a"></div>
<div class="a" style="left:572px;top:295px;width:0;height:0;border-top:4px solid transparent;border-bottom:4px solid transparent;border-left:4px solid #1e1e2a"></div>
<svg class="a" style="left:242px;top:240px" width="16" height="18" viewBox="0 0 16 18"><path d="M2 9.5l4 6 8-13" fill="none" stroke="#3d2f5a" stroke-width="1.8"/></svg>
<svg class="a" style="left:242px;top:264px" width="16" height="18" viewBox="0 0 16 18"><path d="M2 9.5l4 6 8-13" fill="none" stroke="#2a4a30" stroke-width="1.8"/></svg>
<div class="a" style="left:991px;top:727px;width:169px;height:176px;background:#fff"></div>
<div class="a" style="left:1023px;top:754px;width:137px;height:1px;background:#e2e2e8"></div>
<div class="a" style="left:1023px;top:877px;width:137px;height:1px;background:#e2e2e8"></div>
<div class="a" style="left:994px;top:758px;width:20px;height:19px;background:#e4e6ee;border:1px solid #c8cad6;border-radius:2px"></div>
<div class="t" style="left:998px;top:759px;font-family:'Liberation Serif';font-size:17px;color:#2a4a8a">&#931;</div>
<div class="a" style="left:991px;top:780px;width:169px;height:24px;background:linear-gradient(#e4ebfb,#d0dcf6);border:1px solid #a8b4d8;border-radius:2px"></div>
<svg class="a" style="left:995px;top:783px" width="18" height="18" viewBox="0 0 18 18"><path d="M16 6C12 2 7 3 5 7" fill="none" stroke="#2a2a3a" stroke-width="2"/><path d="M2 5l5-2-1 6z" fill="#2a2a3a"/><circle cx="4" cy="14" r="2.3" fill="#7ac840" stroke="#3a7a20" stroke-width="0.7"/></svg>
<svg class="a" style="left:995px;top:806px" width="18" height="18" viewBox="0 0 18 18"><circle cx="13" cy="3.5" r="3" fill="#7ac840" stroke="#3a7a20" stroke-width="0.7"/><path d="M2 15C6 17 11 16 13 11" fill="none" stroke="#2a2a3a" stroke-width="2"/><path d="M10 10l5-1-1 6z" fill="#2a2a3a"/></svg>
<div class="t" style="left:997px;top:830px;font-size:18px;font-weight:bold;font-style:italic;color:#3a4262">N</div>
<svg class="a" style="left:995px;top:853px" width="20" height="20" viewBox="0 0 20 20"><text x="1" y="10" font-family="Liberation Sans" font-size="11" font-weight="bold" fill="#2a4a8a">&#931;</text><path d="M6 17l8-8" stroke="#2a2a3a" stroke-width="1.3"/><text x="11" y="18" font-family="Liberation Sans" font-size="9" font-style="italic" font-weight="bold" fill="#2a2a3a">n</text></svg>
<div class="t" style="left:1023px;top:736px;font-size:12px;color:#1e1e2a">Dodaj nowe zliczanie</div>
<div class="t" style="left:1023px;top:762px;font-size:12px;color:#1e1e2a">Suma</div>
<div class="t" style="left:1023px;top:786px;font-size:12px;color:#1e1e2a">Minimum</div>
<div class="t" style="left:1023px;top:810px;font-size:12px;color:#1e1e2a">Maksimum</div>
<div class="t" style="left:1023px;top:834px;font-size:12px;color:#1e1e2a">Licznik</div>
<div class="t" style="left:1023px;top:858px;font-size:12px;color:#1e1e2a">Średnia</div>
<div class="t" style="left:1023px;top:886px;font-size:12px;color:#1e1e2a">Brak</div>
<div class="a" style="left:1145px;top:737px;width:0;height:0;border-top:4px solid transparent;border-bottom:4px solid transparent;border-left:4px solid #1e1e2a"></div>
<svg class="a" style="left:230px;top:55px" width="150" height="100"><defs><filter id="fa"><feDropShadow dx="1.5" dy="2" stdDeviation="1.2" flood-color="#000" flood-opacity="0.35"/></filter></defs><g filter="url(#fa)"><path d="M124 17 L45 70" stroke="#6a2a9a" stroke-width="9.5" stroke-linecap="round"/><path d="M26 81 L40 54 L57 79 Z" fill="#6a2a9a" stroke="#6a2a9a" stroke-width="2" stroke-linejoin="round"/></g></svg>
<svg class="a" style="left:363px;top:49px;overflow:visible" width="190" height="30"><defs><filter id="f363" x="-10%" y="-30%" width="120%" height="160%"><feDropShadow dx="2" dy="3" stdDeviation="2" flood-color="#000" flood-opacity="0.5"/></filter></defs><g filter="url(#f363)"><text x="0" y="21.6" text-anchor="start" font-family="Liberation Sans" font-size="24" letter-spacing="0" fill="#6e2a9e" stroke="#fff" stroke-width="8.5" stroke-linejoin="round" paint-order="stroke" transform="scale(1.0,1)">Ustawienie tabeli</text></g></svg>
<svg class="a" style="left:1160px;top:500px;overflow:visible" width="240" height="30"><defs><filter id="f1160" x="-10%" y="-30%" width="120%" height="160%"><feDropShadow dx="2" dy="3" stdDeviation="2" flood-color="#000" flood-opacity="0.5"/></filter></defs><g filter="url(#f1160)"><text x="0" y="19.8" text-anchor="start" font-family="Liberation Sans" font-size="22" letter-spacing="0" fill="#6e1f9e" stroke="#fff" stroke-width="8.5" stroke-linejoin="round" paint-order="stroke" transform="scale(1.087,1)">Podsumowanie grupy</text></g></svg>
<svg class="a" style="left:1177px;top:812px;overflow:visible" width="240" height="30"><defs><filter id="f1177" x="-10%" y="-30%" width="120%" height="160%"><feDropShadow dx="2" dy="3" stdDeviation="2" flood-color="#000" flood-opacity="0.5"/></filter></defs><g filter="url(#f1177)"><text x="0" y="19.8" text-anchor="start" font-family="Liberation Sans" font-size="22" letter-spacing="0" fill="#1fa22e" stroke="#fff" stroke-width="8.5" stroke-linejoin="round" paint-order="stroke" transform="scale(1.09,1)">Podsumowanie tabeli</text></g></svg>
<svg class="a" style="left:715px;top:845px" width="290" height="45"><defs><filter id="fo"><feDropShadow dx="1" dy="2" stdDeviation="1.2" flood-color="#000" flood-opacity="0.35"/></filter></defs><g filter="url(#fo)"><path d="M14 16.5 L238 15.5 L238 26 L14 24.5 A4 4 0 0 1 14 16.5Z" fill="#f2a20c"/><path d="M236 7 L268 21.5 L236 36.5 Z" fill="#f2a20c" stroke="#f2a20c" stroke-width="1" stroke-linejoin="round"/></g></svg>
<svg class="a" style="left:405px;top:825px;overflow:visible" width="320" height="90"><defs><filter id="f405" x="-10%" y="-30%" width="120%" height="160%"><feDropShadow dx="2" dy="3" stdDeviation="2" flood-color="#000" flood-opacity="0.5"/></filter></defs><g filter="url(#f405)"><text x="160.0" y="18.900000000000002" text-anchor="middle" font-family="Liberation Sans" font-size="21" letter-spacing="1.6" fill="#f5a300" stroke="#fff" stroke-width="8.5" stroke-linejoin="round" paint-order="stroke" transform="scale(1.0,1)">Opcje możliwe do włączenia</text><text x="160.0" y="45.5" text-anchor="middle" font-family="Liberation Sans" font-size="21" letter-spacing="1.6" fill="#f5a300" stroke="#fff" stroke-width="8.5" stroke-linejoin="round" paint-order="stroke" transform="scale(1.0,1)">prawym przyciskiem myszy</text><text x="160.0" y="72.10000000000001" text-anchor="middle" font-family="Liberation Sans" font-size="21" letter-spacing="1.6" fill="#f5a300" stroke="#fff" stroke-width="8.5" stroke-linejoin="round" paint-order="stroke" transform="scale(1.0,1)">w podsumowaniach tabel</text></g></svg>
</body></html>
